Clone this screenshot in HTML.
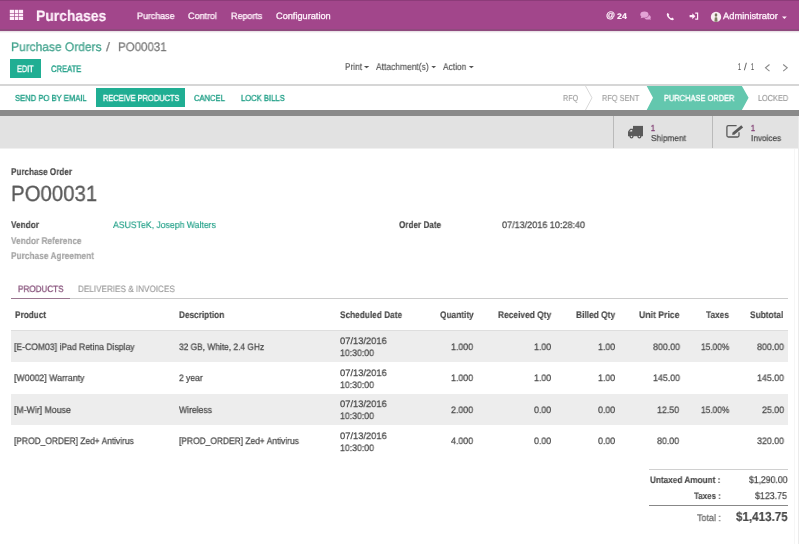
<!DOCTYPE html>
<html><head><meta charset="utf-8"><style>
html,body{margin:0;padding:0;width:799px;height:544px;overflow:hidden;background:#fff;}
body{position:relative;font-family:"Liberation Sans",sans-serif;}
.t{position:absolute;will-change:transform;white-space:nowrap;line-height:1;transform-origin:0 0;text-rendering:geometricPrecision;}
.r{position:absolute;}
</style></head><body>
<div class="r" style="left:0px;top:0px;width:799px;height:29px;background:#a2468b;"></div>
<div class="r" style="left:0px;top:0px;width:799px;height:1px;background:#8c3b79;"></div>
<div class="r" style="left:0px;top:29px;width:799px;height:2px;background:#8f4a7e;"></div>
<div class="r" style="left:0px;top:31px;width:799px;height:1px;background:#e9e3e7;"></div>
<div class="r" style="left:0px;top:32px;width:799px;height:1px;background:#f7f4f6;"></div>
<svg class="r" style="left:0;top:0" width="40" height="31"><g fill="#ffeefa"><rect x="9.8" y="9.8" width="4.4" height="3.3"/><rect x="14.9" y="9.8" width="3.4" height="3.3"/><rect x="18.9" y="9.8" width="4.2" height="3.3"/><rect x="9.8" y="13.7" width="4.4" height="2.5"/><rect x="14.9" y="13.7" width="3.4" height="2.5"/><rect x="18.9" y="13.7" width="4.2" height="2.5"/><rect x="9.8" y="16.8" width="4.4" height="3.2"/><rect x="14.9" y="16.8" width="3.4" height="3.2"/><rect x="18.9" y="16.8" width="4.2" height="3.2"/></g></svg>
<div class="t" style="left:35.60px;top:9px;font-size:15.30px;color:#fff2fb;font-weight:bold;transform:scaleX(0.9093);-webkit-text-stroke:0.15px #fff2fb;">Purchases</div>
<div class="t" style="left:136.90px;top:12px;font-size:9.20px;color:#fff2fb;transform:scaleX(0.9673);-webkit-text-stroke:0.3px #fff2fb;">Purchase</div>
<div class="t" style="left:188.00px;top:12px;font-size:9.20px;color:#fff2fb;transform:scaleX(0.9774);-webkit-text-stroke:0.3px #fff2fb;">Control</div>
<div class="t" style="left:230.60px;top:12px;font-size:9.20px;color:#fff2fb;transform:scaleX(0.9745);-webkit-text-stroke:0.3px #fff2fb;">Reports</div>
<div class="t" style="left:275.70px;top:12px;font-size:9.20px;color:#fff2fb;-webkit-text-stroke:0.3px #fff2fb;">Configuration</div>
<div class="t" style="left:616.90px;top:13px;font-size:8.20px;color:#fff2fb;font-weight:bold;transform:scaleX(1.0743);-webkit-text-stroke:0.15px #fff2fb;">24</div>
<div class="t" style="left:605.60px;top:11px;font-size:9.00px;color:#fff2fb;-webkit-text-stroke:0.25px #fff2fb;">@</div>
<div class="t" style="left:723.40px;top:12px;font-size:9.20px;color:#fff2fb;transform:scaleX(1.0131);-webkit-text-stroke:0.3px #fff2fb;">Administrator</div>
<svg class="r" style="left:600px;top:0" width="199" height="31"><g fill="#e3a3d6"><ellipse cx="47.6" cy="17.2" rx="3.1" ry="2.3"/><path d="M48.5 18.8 L50.8 19.9 L50 17.6 Z"/></g><ellipse cx="44.4" cy="14.6" rx="4.6" ry="3.6" fill="#a2468b"/><g fill="#e3a3d6"><ellipse cx="44.4" cy="14.6" rx="4.1" ry="3.1"/><path d="M41.5 16.5 L40.6 18.2 L43.5 17.4 Z"/></g><path d="M67.2 13.2 C66.2 14.2 67 16.5 68.8 18.3 C70.6 20.1 72.6 20.6 73.6 19.7 L73.9 19 L72.3 17.6 L71.3 18.3 C70.3 17.9 69.2 16.8 68.7 15.7 L69.3 14.8 L68 13 Z" fill="#ffeefa"/><path d="M89.6 15.1 H92.3 V13.2 L95.4 16.2 L92.3 19.2 V17.3 H89.6 Z" fill="#ffeefa"/><path d="M95.2 13.2 H97.6 V19.2 H95.2" fill="none" stroke="#ffeefa" stroke-width="1.2"/><circle cx="116" cy="16.9" r="5.2" fill="#f8eef2"/><ellipse cx="116" cy="15" rx="1.3" ry="1.8" fill="#77735c"/><path d="M114.4 21.8 L114.8 17.6 Q116 16.8 117.2 17.6 L117.6 21.8 Z" fill="#7d7a62"/><path d="M182 16.6 H186.8 L184.4 19 Z" fill="#ffeefa"/></svg>
<div class="t" style="left:10.80px;top:41px;font-size:12.40px;color:#40a28c;transform:scaleX(0.9665);-webkit-text-stroke:0.25px #40a28c;">Purchase Orders</div>
<div class="t" style="left:105.90px;top:41px;font-size:12.40px;color:#8a8a8a;transform:scaleX(1.1809);-webkit-text-stroke:0.2px #8a8a8a;">/</div>
<div class="t" style="left:117.60px;top:41px;font-size:12.40px;color:#7a7a7a;transform:scaleX(0.9296);-webkit-text-stroke:0.25px #7a7a7a;">PO00031</div>
<div class="r" style="left:10px;top:59px;width:31px;height:19px;background:#20ae93;"></div>
<div class="t" style="left:17.40px;top:65px;font-size:9.30px;color:#ffffff;transform:scaleX(0.7837);-webkit-text-stroke:0.35px #ffffff;">EDIT</div>
<div class="t" style="left:50.50px;top:65px;font-size:9.30px;color:#22a088;transform:scaleX(0.8181);-webkit-text-stroke:0.35px #22a088;">CREATE</div>
<div class="t" style="left:345.00px;top:63px;font-size:9.80px;color:#555555;transform:scaleX(0.8441);-webkit-text-stroke:0.15px #555555;">Print</div>
<div class="t" style="left:376.00px;top:63px;font-size:9.80px;color:#555555;transform:scaleX(0.8639);-webkit-text-stroke:0.15px #555555;">Attachment(s)</div>
<div class="t" style="left:442.50px;top:63px;font-size:9.80px;color:#555555;transform:scaleX(0.8552);-webkit-text-stroke:0.15px #555555;">Action</div>
<div class="t" style="left:737.80px;top:63px;font-size:9.80px;color:#555555;transform:scaleX(0.5332);-webkit-text-stroke:0.2px #555555;">1</div>
<div class="t" style="left:743.80px;top:63px;font-size:9.80px;color:#555555;-webkit-text-stroke:0.1px #555555;">/</div>
<div class="t" style="left:750.60px;top:63px;font-size:9.80px;color:#555555;transform:scaleX(0.5332);-webkit-text-stroke:0.2px #555555;">1</div>
<svg class="r" style="left:330px;top:55px" width="469" height="25"><path d="M33.9 10.9 H39.3 L36.6 13.3 Z" fill="#555"/><path d="M101.3 10.9 H106.1 L103.7 13.3 Z" fill="#555"/><path d="M138.8 10.9 H143.9 L141.35 13.3 Z" fill="#555"/><path d="M439.5 9.5 L435.5 12.8 L439.5 16.1" fill="none" stroke="#8a8a8a" stroke-width="1.1"/><path d="M453.2 9.5 L457.2 12.8 L453.2 16.1" fill="none" stroke="#8a8a8a" stroke-width="1.1"/></svg>
<div class="r" style="left:0px;top:84px;width:799px;height:2px;background:#d6d6d6;"></div>
<div class="r" style="left:95.7px;top:88.3px;width:89.8px;height:18.4px;background:#20ae93;"></div>
<div class="t" style="left:14.60px;top:94px;font-size:8.70px;color:#22a088;transform:scaleX(0.8805);-webkit-text-stroke:0.35px #22a088;">SEND PO BY EMAIL</div>
<div class="t" style="left:102.50px;top:94px;font-size:8.70px;color:#ffffff;transform:scaleX(0.8554);-webkit-text-stroke:0.35px #ffffff;">RECEIVE PRODUCTS</div>
<div class="t" style="left:194.30px;top:94px;font-size:8.70px;color:#22a088;transform:scaleX(0.8753);-webkit-text-stroke:0.35px #22a088;">CANCEL</div>
<div class="t" style="left:240.60px;top:94px;font-size:8.70px;color:#22a088;transform:scaleX(0.8794);-webkit-text-stroke:0.35px #22a088;">LOCK BILLS</div>
<div class="t" style="left:563.10px;top:94px;font-size:8.70px;color:#a0a0a0;transform:scaleX(0.8335);-webkit-text-stroke:0.15px #a0a0a0;">RFQ</div>
<div class="t" style="left:602.00px;top:94px;font-size:8.70px;color:#a0a0a0;transform:scaleX(0.8504);-webkit-text-stroke:0.15px #a0a0a0;">RFQ SENT</div>
<div class="t" style="left:757.70px;top:94px;font-size:8.70px;color:#9a9a9a;transform:scaleX(0.8441);-webkit-text-stroke:0.15px #9a9a9a;">LOCKED</div>
<svg class="r" style="left:0;top:0" width="799" height="116"><polygon points="646.7,86 741.9,86 748.6,97.8 741.9,110 646.7,110 653,97.8" fill="#63c7ae"/><polyline points="585.5,86 592,97.8 585.5,110" fill="none" stroke="#d8d8d8" stroke-width="1"/></svg>
<div class="t" style="left:663.50px;top:94px;font-size:8.70px;color:#ffffff;transform:scaleX(0.8580);-webkit-text-stroke:0.35px #ffffff;">PURCHASE ORDER</div>
<div class="r" style="left:0px;top:110px;width:799px;height:6px;background:#8a8a8a;"></div>
<div class="r" style="left:0px;top:116px;width:799px;height:32px;background:#e2e2e2;"></div>
<div class="r" style="left:0px;top:148px;width:799px;height:1px;background:#f0f0f0;"></div>
<div class="r" style="left:613px;top:116px;width:1px;height:32px;background:#bababa;"></div>
<div class="r" style="left:712px;top:116px;width:1px;height:32px;background:#bababa;"></div>
<div class="t" style="left:650.80px;top:124px;font-size:8.80px;color:#8a4d7d;font-weight:bold;transform:scaleX(0.7781);-webkit-text-stroke:0.25px #8a4d7d;">1</div>
<div class="t" style="left:650.80px;top:134px;font-size:8.60px;color:#4a4a4a;transform:scaleX(0.9578);-webkit-text-stroke:0.25px #4a4a4a;">Shipment</div>
<div class="t" style="left:750.60px;top:124px;font-size:8.80px;color:#8a4d7d;font-weight:bold;transform:scaleX(0.7781);-webkit-text-stroke:0.25px #8a4d7d;">1</div>
<div class="t" style="left:750.70px;top:134px;font-size:8.60px;color:#4a4a4a;transform:scaleX(0.9543);-webkit-text-stroke:0.25px #4a4a4a;">Invoices</div>
<svg class="r" style="left:600px;top:116px" width="199" height="33"><g fill="#5a5a5a"><rect x="33" y="9.9" width="10" height="10.3"/><path d="M28 20.2 V15.6 L30.2 12.8 H33.2 V20.2 Z"/><circle cx="31.5" cy="20.6" r="2"/><circle cx="39.4" cy="20.6" r="2"/></g><path d="M29.4 15.6 L30.8 13.9 H32.2 V15.6 Z" fill="#e2e2e2"/><circle cx="31.5" cy="20.6" r="0.75" fill="#e2e2e2"/><circle cx="39.4" cy="20.6" r="0.75" fill="#e2e2e2"/><path d="M136.6 9.6 H128.4 Q126.9 9.6 126.9 11.1 V19.5 Q126.9 21 128.4 21 H137.5 Q139 21 139 19.5 V16.3" fill="none" stroke="#5a5a5a" stroke-width="1.3"/><path d="M132.1 18.8 L132.5 16.5 L141.3 9.2 L143.1 11.4 L134.3 18.7 Z" fill="#5a5a5a"/></svg>
<div class="t" style="left:11.10px;top:168px;font-size:9.80px;color:#4a4a4a;font-weight:bold;transform:scaleX(0.8297);-webkit-text-stroke:0.15px #4a4a4a;">Purchase Order</div>
<div class="t" style="left:11.40px;top:183px;font-size:22.00px;color:#5a5a5a;transform:scaleX(0.9274);-webkit-text-stroke:0.3px #5a5a5a;">PO00031</div>
<div class="t" style="left:11.10px;top:221px;font-size:9.80px;color:#4a4a4a;font-weight:bold;transform:scaleX(0.8398);-webkit-text-stroke:0.15px #4a4a4a;">Vendor</div>
<div class="t" style="left:11.10px;top:237px;font-size:9.80px;color:#a3a3a3;font-weight:bold;transform:scaleX(0.8473);-webkit-text-stroke:0.15px #a3a3a3;">Vendor Reference</div>
<div class="t" style="left:11.10px;top:252px;font-size:9.80px;color:#a3a3a3;font-weight:bold;transform:scaleX(0.8487);-webkit-text-stroke:0.15px #a3a3a3;">Purchase Agreement</div>
<div class="t" style="left:113.20px;top:220px;font-size:9.40px;color:#22a088;transform:scaleX(0.9250);-webkit-text-stroke:0.15px #22a088;">ASUSTeK, Joseph Walters</div>
<div class="t" style="left:399.20px;top:221px;font-size:9.80px;color:#4a4a4a;font-weight:bold;transform:scaleX(0.8294);-webkit-text-stroke:0.15px #4a4a4a;">Order Date</div>
<div class="t" style="left:501.70px;top:220px;font-size:9.40px;color:#4a4a4a;transform:scaleX(0.9659);-webkit-text-stroke:0.25px #4a4a4a;">07/13/2016 10:28:40</div>
<div class="t" style="left:17.50px;top:285px;font-size:9.20px;color:#87527b;transform:scaleX(0.8831);-webkit-text-stroke:0.3px #87527b;">PRODUCTS</div>
<div class="t" style="left:78.30px;top:285px;font-size:9.20px;color:#999999;transform:scaleX(0.8857);-webkit-text-stroke:0.15px #999999;">DELIVERIES &amp; INVOICES</div>
<div class="r" style="left:11px;top:298px;width:777px;height:1px;background:#cccccc;"></div>
<div class="r" style="left:11px;top:298px;width:59px;height:1px;background:#9a7790;"></div>
<div class="t" style="left:14.50px;top:311px;font-size:9.60px;color:#4a4a4a;font-weight:bold;transform:scaleX(0.8576);-webkit-text-stroke:0.15px #4a4a4a;">Product</div>
<div class="t" style="left:178.80px;top:311px;font-size:9.60px;color:#4a4a4a;font-weight:bold;transform:scaleX(0.8561);-webkit-text-stroke:0.15px #4a4a4a;">Description</div>
<div class="t" style="left:340.20px;top:311px;font-size:9.60px;color:#4a4a4a;font-weight:bold;transform:scaleX(0.8622);-webkit-text-stroke:0.15px #4a4a4a;">Scheduled Date</div>
<div class="t" style="left:439.50px;top:311px;font-size:9.60px;color:#4a4a4a;font-weight:bold;transform:scaleX(0.8657);-webkit-text-stroke:0.15px #4a4a4a;">Quantity</div>
<div class="t" style="left:498.40px;top:311px;font-size:9.60px;color:#4a4a4a;font-weight:bold;transform:scaleX(0.8744);-webkit-text-stroke:0.15px #4a4a4a;">Received Qty</div>
<div class="t" style="left:575.80px;top:311px;font-size:9.60px;color:#4a4a4a;font-weight:bold;transform:scaleX(0.8726);-webkit-text-stroke:0.15px #4a4a4a;">Billed Qty</div>
<div class="t" style="left:639.10px;top:311px;font-size:9.60px;color:#4a4a4a;font-weight:bold;transform:scaleX(0.9039);-webkit-text-stroke:0.15px #4a4a4a;">Unit Price</div>
<div class="t" style="left:706.00px;top:311px;font-size:9.60px;color:#4a4a4a;font-weight:bold;transform:scaleX(0.8635);-webkit-text-stroke:0.15px #4a4a4a;">Taxes</div>
<div class="t" style="left:750.40px;top:311px;font-size:9.60px;color:#4a4a4a;font-weight:bold;transform:scaleX(0.8698);-webkit-text-stroke:0.15px #4a4a4a;">Subtotal</div>
<div class="r" style="left:11px;top:330px;width:777px;height:1px;background:#dedede;"></div>
<div class="r" style="left:11px;top:330.5px;width:777px;height:31.5px;background:#ededed;"></div>
<div class="t" style="left:14.30px;top:342px;font-size:9.40px;color:#4a4a4a;transform:scaleX(0.9184);-webkit-text-stroke:0.25px #4a4a4a;">[E-COM03] iPad Retina Display</div>
<div class="t" style="left:179.10px;top:342px;font-size:9.40px;color:#4a4a4a;transform:scaleX(0.8923);-webkit-text-stroke:0.25px #4a4a4a;">32 GB, White, 2.4 GHz</div>
<div class="t" style="left:340.20px;top:336px;font-size:9.40px;color:#4a4a4a;transform:scaleX(0.9947);-webkit-text-stroke:0.25px #4a4a4a;">07/13/2016</div>
<div class="t" style="left:340.20px;top:348px;font-size:9.40px;color:#4a4a4a;transform:scaleX(0.9320);-webkit-text-stroke:0.25px #4a4a4a;">10:30:00</div>
<div class="t" style="left:451.09px;top:342px;font-size:9.40px;color:#4a4a4a;transform:scaleX(0.9400);-webkit-text-stroke:0.25px #4a4a4a;">1.000</div>
<div class="t" style="left:534.39px;top:342px;font-size:9.40px;color:#4a4a4a;transform:scaleX(0.9400);-webkit-text-stroke:0.25px #4a4a4a;">1.00</div>
<div class="t" style="left:597.69px;top:342px;font-size:9.40px;color:#4a4a4a;transform:scaleX(0.9400);-webkit-text-stroke:0.25px #4a4a4a;">1.00</div>
<div class="t" style="left:652.58px;top:342px;font-size:9.40px;color:#4a4a4a;transform:scaleX(0.9400);-webkit-text-stroke:0.25px #4a4a4a;">800.00</div>
<div class="t" style="left:700.90px;top:342px;font-size:9.40px;color:#4a4a4a;transform:scaleX(0.8874);-webkit-text-stroke:0.25px #4a4a4a;">15.00%</div>
<div class="t" style="left:756.78px;top:342px;font-size:9.40px;color:#4a4a4a;transform:scaleX(0.9400);-webkit-text-stroke:0.25px #4a4a4a;">800.00</div>
<div class="t" style="left:14.30px;top:373px;font-size:9.40px;color:#4a4a4a;transform:scaleX(0.9362);-webkit-text-stroke:0.25px #4a4a4a;">[W0002] Warranty</div>
<div class="t" style="left:179.10px;top:373px;font-size:9.40px;color:#4a4a4a;transform:scaleX(0.9069);-webkit-text-stroke:0.25px #4a4a4a;">2 year</div>
<div class="t" style="left:340.20px;top:368px;font-size:9.40px;color:#4a4a4a;transform:scaleX(0.9947);-webkit-text-stroke:0.25px #4a4a4a;">07/13/2016</div>
<div class="t" style="left:340.20px;top:380px;font-size:9.40px;color:#4a4a4a;transform:scaleX(0.9320);-webkit-text-stroke:0.25px #4a4a4a;">10:30:00</div>
<div class="t" style="left:451.09px;top:373px;font-size:9.40px;color:#4a4a4a;transform:scaleX(0.9400);-webkit-text-stroke:0.25px #4a4a4a;">1.000</div>
<div class="t" style="left:534.39px;top:373px;font-size:9.40px;color:#4a4a4a;transform:scaleX(0.9400);-webkit-text-stroke:0.25px #4a4a4a;">1.00</div>
<div class="t" style="left:597.69px;top:373px;font-size:9.40px;color:#4a4a4a;transform:scaleX(0.9400);-webkit-text-stroke:0.25px #4a4a4a;">1.00</div>
<div class="t" style="left:652.58px;top:373px;font-size:9.40px;color:#4a4a4a;transform:scaleX(0.9400);-webkit-text-stroke:0.25px #4a4a4a;">145.00</div>
<div class="t" style="left:756.78px;top:373px;font-size:9.40px;color:#4a4a4a;transform:scaleX(0.9400);-webkit-text-stroke:0.25px #4a4a4a;">145.00</div>
<div class="r" style="left:11px;top:393.5px;width:777px;height:31.5px;background:#ededed;"></div>
<div class="t" style="left:14.30px;top:405px;font-size:9.40px;color:#4a4a4a;transform:scaleX(0.9329);-webkit-text-stroke:0.25px #4a4a4a;">[M-Wir] Mouse</div>
<div class="t" style="left:179.10px;top:405px;font-size:9.40px;color:#4a4a4a;transform:scaleX(0.9188);-webkit-text-stroke:0.25px #4a4a4a;">Wireless</div>
<div class="t" style="left:340.20px;top:399px;font-size:9.40px;color:#4a4a4a;transform:scaleX(0.9947);-webkit-text-stroke:0.25px #4a4a4a;">07/13/2016</div>
<div class="t" style="left:340.20px;top:411px;font-size:9.40px;color:#4a4a4a;transform:scaleX(0.9320);-webkit-text-stroke:0.25px #4a4a4a;">10:30:00</div>
<div class="t" style="left:451.09px;top:405px;font-size:9.40px;color:#4a4a4a;transform:scaleX(0.9400);-webkit-text-stroke:0.25px #4a4a4a;">2.000</div>
<div class="t" style="left:534.39px;top:405px;font-size:9.40px;color:#4a4a4a;transform:scaleX(0.9400);-webkit-text-stroke:0.25px #4a4a4a;">0.00</div>
<div class="t" style="left:597.69px;top:405px;font-size:9.40px;color:#4a4a4a;transform:scaleX(0.9400);-webkit-text-stroke:0.25px #4a4a4a;">0.00</div>
<div class="t" style="left:657.49px;top:405px;font-size:9.40px;color:#4a4a4a;transform:scaleX(0.9400);-webkit-text-stroke:0.25px #4a4a4a;">12.50</div>
<div class="t" style="left:700.90px;top:405px;font-size:9.40px;color:#4a4a4a;transform:scaleX(0.8874);-webkit-text-stroke:0.25px #4a4a4a;">15.00%</div>
<div class="t" style="left:761.69px;top:405px;font-size:9.40px;color:#4a4a4a;transform:scaleX(0.9400);-webkit-text-stroke:0.25px #4a4a4a;">25.00</div>
<div class="t" style="left:14.30px;top:436px;font-size:9.40px;color:#4a4a4a;transform:scaleX(0.8963);-webkit-text-stroke:0.25px #4a4a4a;">[PROD_ORDER] Zed+ Antivirus</div>
<div class="t" style="left:179.10px;top:436px;font-size:9.40px;color:#4a4a4a;transform:scaleX(0.8970);-webkit-text-stroke:0.25px #4a4a4a;">[PROD_ORDER] Zed+ Antivirus</div>
<div class="t" style="left:340.20px;top:431px;font-size:9.40px;color:#4a4a4a;transform:scaleX(0.9947);-webkit-text-stroke:0.25px #4a4a4a;">07/13/2016</div>
<div class="t" style="left:340.20px;top:443px;font-size:9.40px;color:#4a4a4a;transform:scaleX(0.9320);-webkit-text-stroke:0.25px #4a4a4a;">10:30:00</div>
<div class="t" style="left:451.09px;top:436px;font-size:9.40px;color:#4a4a4a;transform:scaleX(0.9400);-webkit-text-stroke:0.25px #4a4a4a;">4.000</div>
<div class="t" style="left:534.39px;top:436px;font-size:9.40px;color:#4a4a4a;transform:scaleX(0.9400);-webkit-text-stroke:0.25px #4a4a4a;">0.00</div>
<div class="t" style="left:597.69px;top:436px;font-size:9.40px;color:#4a4a4a;transform:scaleX(0.9400);-webkit-text-stroke:0.25px #4a4a4a;">0.00</div>
<div class="t" style="left:657.49px;top:436px;font-size:9.40px;color:#4a4a4a;transform:scaleX(0.9400);-webkit-text-stroke:0.25px #4a4a4a;">80.00</div>
<div class="t" style="left:756.78px;top:436px;font-size:9.40px;color:#4a4a4a;transform:scaleX(0.9400);-webkit-text-stroke:0.25px #4a4a4a;">320.00</div>
<div class="r" style="left:649px;top:469px;width:139px;height:1px;background:#d0d0d0;"></div>
<div class="t" style="left:650.00px;top:475px;font-size:9.40px;color:#4a4a4a;font-weight:bold;transform:scaleX(0.8759);-webkit-text-stroke:0.15px #4a4a4a;">Untaxed Amount :</div>
<div class="t" style="left:748.90px;top:476px;font-size:9.80px;color:#4a4a4a;transform:scaleX(0.8805);-webkit-text-stroke:0.25px #4a4a4a;">$1,290.00</div>
<div class="t" style="left:693.70px;top:491px;font-size:9.40px;color:#4a4a4a;font-weight:bold;transform:scaleX(0.8485);-webkit-text-stroke:0.15px #4a4a4a;">Taxes :</div>
<div class="t" style="left:755.40px;top:492px;font-size:9.80px;color:#4a4a4a;transform:scaleX(0.9004);-webkit-text-stroke:0.25px #4a4a4a;">$123.75</div>
<div class="r" style="left:649px;top:505px;width:139px;height:1px;background:#888888;"></div>
<div class="t" style="left:696.70px;top:514px;font-size:9.60px;color:#666666;transform:scaleX(0.9333);-webkit-text-stroke:0.25px #666666;">Total :</div>
<div class="t" style="left:735.50px;top:510px;font-size:13.00px;color:#4a4a4a;font-weight:bold;transform:scaleX(0.8954);-webkit-text-stroke:0.15px #4a4a4a;">$1,413.75</div>
<div class="r" style="left:794px;top:149px;width:1px;height:395px;background:#f6f6f6;"></div>
<div class="r" style="left:798px;top:116px;width:1px;height:428px;background:#ebebeb;"></div>
</body></html>
